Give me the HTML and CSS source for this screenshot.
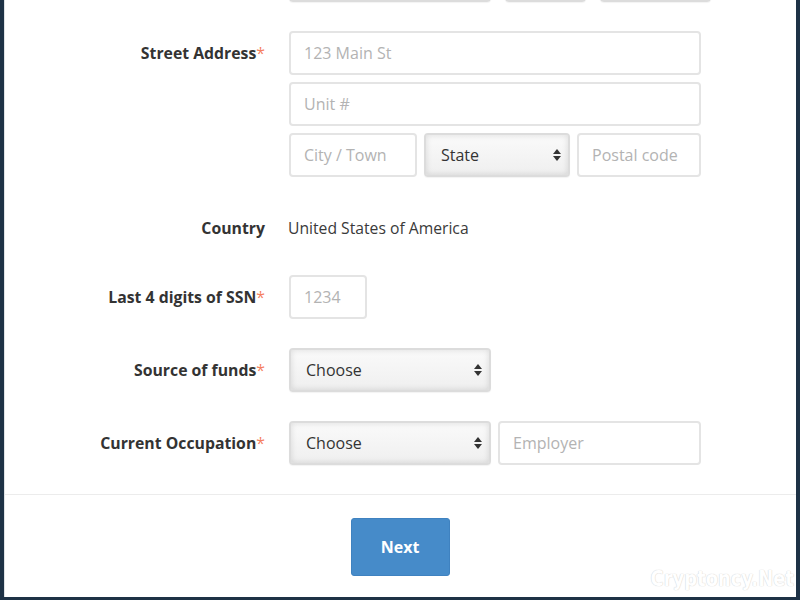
FILE: index.html
```html
<!DOCTYPE html>
<html>
<head>
<meta charset="utf-8">
<link rel="stylesheet" href="styles.css">
</head>
<body>
<div class="frame">
  <div class="panel">
    <form class="form">
      <div class="row row-top">
        <div class="label"></div>
        <div class="fields line">
          <div class="select w-month"><span>Month</span><i class="arrows"></i></div>
          <div class="select w-day"><span>Day</span><i class="arrows"></i></div>
          <div class="select w-year"><span>Year</span><i class="arrows"></i></div>
        </div>
      </div>

      <div class="row row-group">
        <div class="label">Street Address<span class="req">*</span></div>
        <div class="fields stack">
          <div class="input full ph">123 Main St</div>
          <div class="input full ph">Unit #</div>
          <div class="line">
            <div class="input w-city ph">City / Town</div>
            <div class="select w-state"><span>State</span><i class="arrows"></i></div>
            <div class="input w-postal ph">Postal code</div>
          </div>
        </div>
      </div>

      <div class="row row-country">
        <div class="label">Country</div>
        <div class="fields value">United States of America</div>
      </div>

      <div class="row">
        <div class="label">Last 4 digits of SSN<span class="req">*</span></div>
        <div class="fields">
          <div class="input w-ssn ph">1234</div>
        </div>
      </div>

      <div class="row">
        <div class="label">Source of funds<span class="req">*</span></div>
        <div class="fields">
          <div class="select w-choose"><span>Choose</span><i class="arrows"></i></div>
        </div>
      </div>

      <div class="row">
        <div class="label">Current Occupation<span class="req">*</span></div>
        <div class="fields line">
          <div class="select w-choose"><span>Choose</span><i class="arrows"></i></div>
          <div class="input w-employer ph">Employer</div>
        </div>
      </div>
    </form>
    <div class="footer">
      <button type="button" class="btn">Next</button>
    </div>
    <div class="watermark">Cryptoncy.Net</div>
  </div>
</div>
</body>
</html>
```
FILE: styles.css
```css
* { box-sizing: border-box; }
html, body { margin: 0; padding: 0; }
body {
  background: #1e3246;
  font-family: "Open Sans", "Noto Sans", sans-serif;
  color: #333;
  width: 800px;
  height: 600px;
  overflow: hidden;
}
.frame {
  padding: 0 4px 3px 4px;
  height: 600px;
}
.panel {
  position: relative;
  background: #fff;
  height: 597px;
  overflow: hidden;
  border-left: 1px solid #dfe3e6;
}
.form {
  display: flex;
  flex-direction: column;
  gap: 29px;
  margin-top: -42px;
  padding-bottom: 29px;
  border-bottom: 1px solid #ececec;
}
.row {
  display: grid;
  grid-template-columns: 260px 412px;
  column-gap: 24px;
  align-items: center;
}
.row-group { align-items: start; }
.row-group .label { line-height: 44px; }
.row-country { height: 40px; padding-top: 4px; }
.label {
  text-align: right;
  font-weight: 700;
  font-size: 15.8px;
  color: #333;
}
.req { color: #f57f5f; font-weight: 400; }
.fields { display: block; }
.stack { display: flex; flex-direction: column; gap: 7px; }
.line { display: flex; gap: 7px; }
.line > * { flex-shrink: 0; }
.row-top .line { gap: 14px; }
.value { font-size: 15.7px; color: #3a3a3a; margin-left: -1px; }
.input, .select {
  height: 44px;
  border: 2px solid #e4e4e4;
  border-radius: 4px;
  display: flex;
  align-items: center;
  font-size: 16px;
  padding: 0 13px;
  background: #fff;
}
.ph { color: #b3b3b3; }
.select {
  position: relative;
  color: #333;
  border-color: #dcdcdc;
  background: linear-gradient(#fafafa, #efefef);
  box-shadow: inset 0 0 6px rgba(0,0,0,0.12), 0 1px 1px rgba(0,0,0,0.05);
  padding: 0 15px;
}
.arrows {
  position: absolute;
  right: 7px;
  top: 50%;
  width: 8px;
  height: 12px;
  margin-top: -6px;
}
.arrows::before, .arrows::after {
  content: "";
  position: absolute;
  left: 0;
  border-left: 4px solid transparent;
  border-right: 4px solid transparent;
}
.arrows::before { top: 0; border-bottom: 5px solid #333; }
.arrows::after { bottom: 0; border-top: 5px solid #333; }
.full { width: 412px; }
.w-city { width: 128px; }
.w-state { width: 146px; }
.w-postal { width: 124px; }
.w-ssn { width: 78px; }
.w-choose { width: 202px; }
.w-employer { width: 203px; }
.w-month { width: 202px; }
.w-day { width: 81px; }
.w-year { width: 111px; }
.row-top .select span { visibility: hidden; }
.footer {
  display: flex;
  justify-content: center;
  padding-top: 23px;
}
.btn {
  width: 99px;
  height: 58px;
  background: #468bc9;
  border: 1px solid #3f82c0;
  border-radius: 3px;
  color: #fff;
  font-family: "Open Sans", "Noto Sans", sans-serif;
  font-weight: 700;
  font-size: 16px;
  cursor: pointer;
  margin-left: -1px;
}
.watermark {
  position: absolute;
  right: 2px;
  bottom: 6px;
  font-family: "DejaVu Sans Condensed", "DejaVu Sans", sans-serif;
  font-weight: 700;
  font-size: 21px;
  color: #fff;
  text-shadow: 0 0 1px #d4d4d4, 0 0 1px #d4d4d4;
  letter-spacing: 0;
  transform: scaleX(0.95);
  transform-origin: right center;
}
```
